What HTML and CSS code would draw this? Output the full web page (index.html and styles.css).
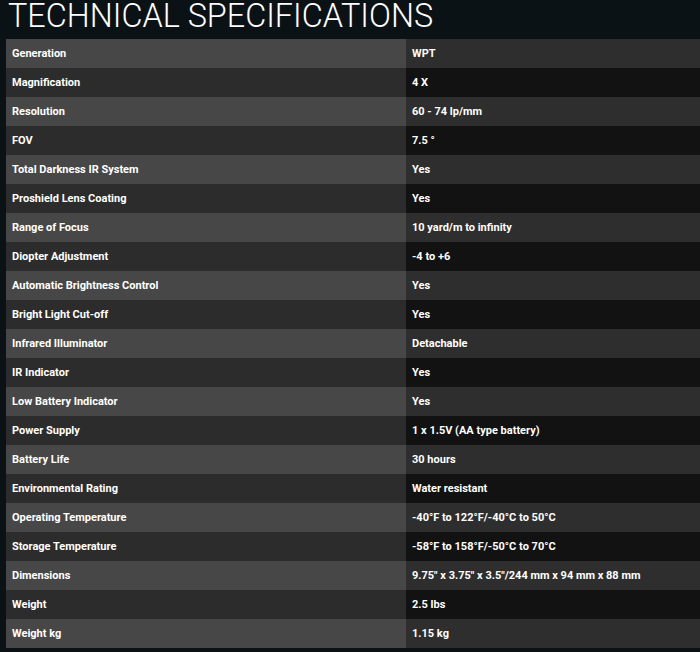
FILE: index.html
```html
<!DOCTYPE html>
<html>
<head>
<meta charset="utf-8">
<link rel="stylesheet" href="styles.css">
</head>
<body>
<div class="page">
  <h2 class="title">TECHNICAL SPECIFICATIONS</h2>
  <table class="specs">
    <tr><td class="k">Generation</td><td class="v">WPT</td></tr>
    <tr><td class="k">Magnification</td><td class="v">4 X</td></tr>
    <tr><td class="k">Resolution</td><td class="v">60 - 74 lp/mm</td></tr>
    <tr><td class="k">FOV</td><td class="v">7.5 °</td></tr>
    <tr><td class="k">Total Darkness IR System</td><td class="v">Yes</td></tr>
    <tr><td class="k">Proshield Lens Coating</td><td class="v">Yes</td></tr>
    <tr><td class="k">Range of Focus</td><td class="v">10 yard/m to infinity</td></tr>
    <tr><td class="k">Diopter Adjustment</td><td class="v">-4 to +6</td></tr>
    <tr><td class="k">Automatic Brightness Control</td><td class="v">Yes</td></tr>
    <tr><td class="k">Bright Light Cut-off</td><td class="v">Yes</td></tr>
    <tr><td class="k">Infrared Illuminator</td><td class="v">Detachable</td></tr>
    <tr><td class="k">IR Indicator</td><td class="v">Yes</td></tr>
    <tr><td class="k">Low Battery Indicator</td><td class="v">Yes</td></tr>
    <tr><td class="k">Power Supply</td><td class="v">1 x 1.5V (AA type battery)</td></tr>
    <tr><td class="k">Battery Life</td><td class="v">30 hours</td></tr>
    <tr><td class="k">Environmental Rating</td><td class="v">Water resistant</td></tr>
    <tr><td class="k">Operating Temperature</td><td class="v">-40°F to 122°F/-40°C to 50°C</td></tr>
    <tr><td class="k">Storage Temperature</td><td class="v">-58°F to 158°F/-50°C to 70°C</td></tr>
    <tr><td class="k">Dimensions</td><td class="v">9.75" x 3.75" x 3.5"/244 mm x 94 mm x 88 mm</td></tr>
    <tr><td class="k">Weight</td><td class="v">2.5 lbs</td></tr>
    <tr><td class="k">Weight kg</td><td class="v">1.15 kg</td></tr>
  </table>
</div>
</body>
</html>
```
FILE: styles.css
```css
html, body {
  margin: 0;
  padding: 0;
  background: #0b1216;
}
.page {
  padding: 0 0 0 6px;
  font-family: Roboto, "Liberation Sans", sans-serif;
  color: #ffffff;
}
.title {
  margin: 0 0 0 2px;
  height: 39px;
  padding-top: 0;
  box-sizing: border-box;
  font-family: Roboto, "Liberation Sans", sans-serif;
  font-weight: 300;
  font-size: 32.4px;
  line-height: 32px;
  color: #ffffff;
  white-space: nowrap;
}
.specs {
  border-collapse: collapse;
  width: 694px;
  table-layout: fixed;
}
.specs td {
  height: 29px;
  padding: 0 6px;
  box-sizing: border-box;
  font-size: 11px;
  font-weight: 700;
  vertical-align: middle;
  white-space: nowrap;
}
.specs td.k {
  width: 400px;
}
.specs tr:nth-child(odd) td.k { background: #474747; }
.specs tr:nth-child(odd) td.v { background: #2e2e2e; }
.specs tr:nth-child(even) td.k { background: #2c2c2c; }
.specs tr:nth-child(even) td.v { background: #121212; }
```
